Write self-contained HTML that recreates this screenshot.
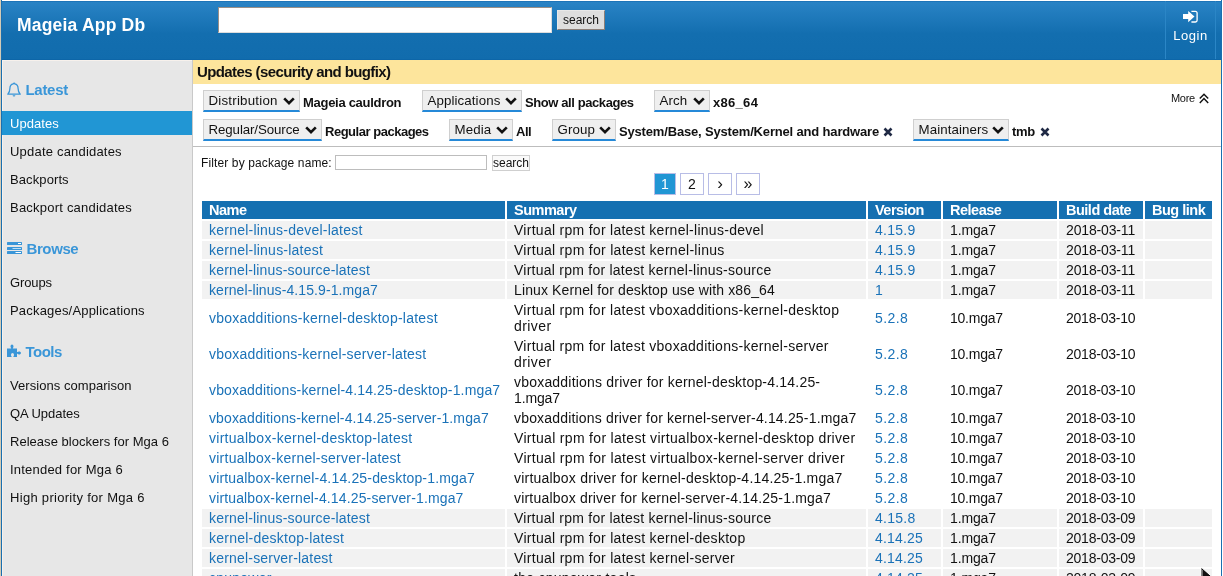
<!DOCTYPE html>
<html><head><meta charset="utf-8">
<style>
*{box-sizing:border-box}
html,body{margin:0;padding:0}
body{width:1223px;height:576px;overflow:hidden;position:relative;background:#fff;font-family:"Liberation Sans",sans-serif;color:#111}
.a{position:absolute;white-space:nowrap}
#edgeL{left:0;top:0;width:1px;height:576px;background:#d3cbb6}
#bordL{left:1px;top:0;width:1px;height:576px;background:#1a6fb0}
#bordR{left:1221px;top:0;width:1px;height:576px;background:#1a6fb0}
#hdr{left:1px;top:1px;width:1221px;height:59px;border-top:1px solid #1d74b8;background:linear-gradient(#2983c5,#136eaf 55%,#116cad)}
#hdrline{left:1px;top:59px;width:1221px;height:1px;background:#0d66a8}
#side{left:2px;top:60px;width:190px;height:516px;background:#e7e7e7;border-top:1px solid #f7f1ec;border-left:1px solid #f7f1ec}
#sideB{left:192px;top:60px;width:1px;height:516px;background:#c9c9c9}
#title{left:17px;top:15px;font-size:17.5px;font-weight:bold;color:#fff;letter-spacing:0.2px}
#q{left:218px;top:7px;width:334px;height:26px;background:#fff;border:1px solid #9a8f88;border-right-color:#ddd;border-bottom-color:#ddd}
#qb{left:557px;top:10px;width:48px;height:20px;background:#dedede;border:1px solid #8c7f78;border-top-color:#e8e8e8;border-left-color:#e8e8e8;font-size:12px;line-height:18px;text-align:center;color:#111}
#loginL{left:1165px;top:1px;width:1px;height:58px;background:#2b86c6}
#loginR{left:1215px;top:1px;width:1px;height:58px;background:#2b86c6}
#login{left:1166px;top:28px;width:49px;text-align:center;color:#fff;font-size:13px;letter-spacing:0.5px}
#banner{left:193px;top:60px;width:1028px;height:24px;background:#fde59c}
#btitle{left:197px;top:63px;font-size:15px;font-weight:bold;color:#111;letter-spacing:-0.6px}
.sh{font-size:15px;font-weight:bold;color:#3a96d8}
.si{font-size:13px;color:#111;left:10px;letter-spacing:0.2px}
#act{left:2px;top:111px;width:190px;height:24px;background:#2196d4}
.sel{height:22px;background:#efefef;border:1px solid #cfcfcf;border-bottom:2px solid #2589d8;font-size:13.3px;color:#111;padding-left:4.5px;line-height:19px;letter-spacing:0.1px}
.sel svg{position:absolute;right:4px;top:6px}
.fv{font-size:13px;font-weight:bold;color:#111;margin-top:0.5px}
#sep{left:193px;top:146px;width:1028px;height:1px;background:#bdbdbd}
.pg{top:173px;height:22px;border:1px solid #b8bde6;font-size:14px;text-align:center;line-height:20px;color:#111}
table{position:absolute;left:200px;top:199px;width:1014px;border-collapse:separate;border-spacing:2px;table-layout:fixed;font-size:14px}
td,th{padding:0 0 0 7px;line-height:16px;vertical-align:middle;text-align:left;white-space:nowrap;overflow:hidden}
th{background:#1570b1;color:#fff;font-weight:bold;height:18px;font-size:14.5px;letter-spacing:-0.5px}
td{height:18px;letter-spacing:0.18px}
tr.g td{background:#f2f2f2}
td.w{white-space:normal}
a{color:#1a72b8;text-decoration:none}
#wrap{position:absolute;left:0;top:0;width:1223px;height:576px;overflow:hidden;background:#fff;will-change:transform}
</style></head><body><div id="wrap">
<div class="a" id="edgeL"></div>
<div class="a" id="hdr"></div>
<div class="a" id="hdrline"></div>
<div class="a" id="side"></div>
<div class="a" id="sideB"></div>
<div class="a" id="bordL"></div>
<div class="a" id="bordR"></div>

<div class="a" id="title">Mageia App Db</div>
<div class="a" id="q"></div>
<div class="a" id="qb">search</div>
<div class="a" id="loginL"></div>
<div class="a" id="loginR"></div>
<svg class="a" style="left:1183px;top:10px" width="16" height="14" viewBox="0 0 16 14"><path d="M0 4h5.2V1l6.3 5.6-6.3 5.6V9H0z" fill="#fff"/><path d="M8.4 1.4h4a1.7 1.7 0 0 1 1.7 1.7v7.2a1.7 1.7 0 0 1-1.7 1.7h-4" fill="none" stroke="#fff" stroke-width="1.3"/></svg>
<div class="a" id="login">Login</div>

<!-- sidebar -->
<svg class="a" style="left:7px;top:82px" width="14" height="15" viewBox="0 0 14 15"><path d="M7 1.2c.5 0 .8.3.8.7 2.3.4 3.3 2.3 3.3 4.6 0 2.3.3 3.9 2.1 5.7H.8c1.8-1.8 2.1-3.4 2.1-5.7 0-2.3 1-4.2 3.3-4.6 0-.4.3-.7.8-.7z" fill="none" stroke="#3a96d8" stroke-width="1.3" stroke-linejoin="round"/><path d="M5.6 13.2a1.4 1.4 0 0 0 2.8 0z" fill="#3a96d8"/></svg>
<div class="a sh" style="left:25.5px;top:81px;letter-spacing:-0.3px">Latest</div>
<div class="a" id="act"></div>
<div class="a si" style="top:116px;color:#fff;letter-spacing:0.05px">Updates</div>
<div class="a si" style="top:144px;letter-spacing:0.2px">Update candidates</div>
<div class="a si" style="top:172px;letter-spacing:0.1px">Backports</div>
<div class="a si" style="top:200px;letter-spacing:0.22px">Backport candidates</div>
<svg class="a" style="left:7px;top:242px" width="15" height="12" viewBox="0 0 15 12"><rect x="0" y="0" width="15" height="3" rx=".6" fill="#3a96d8"/><rect x="0" y="5" width="15" height="3" rx=".6" fill="#3a96d8"/><rect x="0" y="9" width="15" height="3" rx=".6" fill="#3a96d8"/><rect x="11" y="1" width="3" height="1" fill="#fff"/><rect x="5.5" y="6" width="8.5" height="1" fill="#bfe0f5"/><rect x="8.5" y="10" width="5.5" height="1" fill="#fff"/></svg>
<div class="a sh" style="left:26.5px;top:240px;letter-spacing:-0.4px">Browse</div>
<div class="a si" style="top:275px;letter-spacing:-0.13px">Groups</div>
<div class="a si" style="top:303px;letter-spacing:0.19px">Packages/Applications</div>
<svg class="a" style="left:7px;top:344px" width="14" height="13" viewBox="0 0 14 13"><path d="M0 4.5h3.8c.4 0 .5-.3.3-.6-.4-.4-.6-.8-.6-1.3C3.5 1.3 4.2.5 5 .5s1.5.8 1.5 2.1c0 .5-.2.9-.6 1.3-.2.3-.1.6.3.6H10v3.2c0 .4.3.5.6.3.4-.4.8-.6 1.3-.6 1.3 0 2.1.7 2.1 1.5s-.8 1.5-2.1 1.5c-.5 0-.9-.2-1.3-.6-.3-.2-.6-.1-.6.3V13H6.7c-.4 0-.5-.3-.3-.6.4-.4.6-.8.6-1.3 0-1.3-.7-2.1-1.5-2.1s-1.5.8-1.5 2.1c0 .5.2.9.6 1.3.2.3.1.6-.3.6H0z" fill="#3a96d8"/></svg>
<div class="a sh" style="left:25.5px;top:343px;letter-spacing:-0.5px">Tools</div>
<div class="a si" style="top:378px;letter-spacing:0.05px">Versions comparison</div>
<div class="a si" style="top:406px;letter-spacing:-0.05px">QA Updates</div>
<div class="a si" style="top:434px;letter-spacing:0.03px">Release blockers for Mga 6</div>
<div class="a si" style="top:462px;letter-spacing:0.21px">Intended for Mga 6</div>
<div class="a si" style="top:490px;letter-spacing:0.3px">High priority for Mga 6</div>

<div class="a" id="banner"></div>
<div class="a" id="btitle">Updates (security and bugfix)</div>


<!-- filters -->
<div class="a sel" style="left:203px;top:90px;width:97px;letter-spacing:0.22px">Distribution<svg width="12" height="9" viewBox="0 0 12 9"><path d="M1.2 1.4l4.8 4.8 4.8-4.8" fill="none" stroke="#111" stroke-width="2.6"/></svg></div>
<div class="a fv" style="left:303px;top:94px;letter-spacing:-0.29px">Mageia cauldron</div>
<div class="a sel" style="left:422px;top:90px;width:100px">Applications<svg width="12" height="9" viewBox="0 0 12 9"><path d="M1.2 1.4l4.8 4.8 4.8-4.8" fill="none" stroke="#111" stroke-width="2.6"/></svg></div>
<div class="a fv" style="left:525px;top:94px;letter-spacing:-0.41px">Show all packages</div>
<div class="a sel" style="left:654px;top:90px;width:56px">Arch<svg width="12" height="9" viewBox="0 0 12 9"><path d="M1.2 1.4l4.8 4.8 4.8-4.8" fill="none" stroke="#111" stroke-width="2.6"/></svg></div>
<div class="a fv" style="left:713px;top:94px;letter-spacing:0.3px">x86_64</div>
<div class="a" style="left:1171px;top:92px;font-size:11px;color:#111;letter-spacing:-0.3px">More</div>
<svg class="a" style="left:1199px;top:93px" width="11" height="11" viewBox="0 0 11 11"><path d="M0.8 5.6L5 1.2l4.2 4.4M0.8 10L5 5.6l4.2 4.4" fill="none" stroke="#111" stroke-width="1.4"/></svg>

<div class="a sel" style="left:203px;top:119px;width:119px;letter-spacing:-0.1px">Regular/Source<svg width="12" height="9" viewBox="0 0 12 9"><path d="M1.2 1.4l4.8 4.8 4.8-4.8" fill="none" stroke="#111" stroke-width="2.6"/></svg></div>
<div class="a fv" style="left:325px;top:123px;letter-spacing:-0.48px">Regular packages</div>
<div class="a sel" style="left:449px;top:119px;width:64px">Media<svg width="12" height="9" viewBox="0 0 12 9"><path d="M1.2 1.4l4.8 4.8 4.8-4.8" fill="none" stroke="#111" stroke-width="2.6"/></svg></div>
<div class="a fv" style="left:516px;top:123px;letter-spacing:-0.5px">All</div>
<div class="a sel" style="left:552px;top:119px;width:64px">Group<svg width="12" height="9" viewBox="0 0 12 9"><path d="M1.2 1.4l4.8 4.8 4.8-4.8" fill="none" stroke="#111" stroke-width="2.6"/></svg></div>
<div class="a fv" style="left:619px;top:123px;letter-spacing:-0.17px">System/Base, System/Kernel and hardware</div>
<svg class="a" style="left:883px;top:127px" width="10" height="10" viewBox="0 0 10 10"><path d="M1.5 1.5l7 7M8.5 1.5l-7 7" stroke="#202a45" stroke-width="2.6"/></svg>
<div class="a sel" style="left:913px;top:119px;width:96px">Maintainers<svg width="12" height="9" viewBox="0 0 12 9"><path d="M1.2 1.4l4.8 4.8 4.8-4.8" fill="none" stroke="#111" stroke-width="2.6"/></svg></div>
<div class="a fv" style="left:1012px;top:123px;letter-spacing:-0.37px">tmb</div>
<svg class="a" style="left:1040px;top:127px" width="10" height="10" viewBox="0 0 10 10"><path d="M1.5 1.5l7 7M8.5 1.5l-7 7" stroke="#202a45" stroke-width="2.6"/></svg>
<div class="a" id="sep"></div>

<div class="a" style="left:201px;top:156px;font-size:12px;color:#111;letter-spacing:0.12px">Filter by package name:</div>
<div class="a" style="left:335px;top:155px;width:152px;height:15px;border:1px solid #bdbdbd;background:#fff"></div>
<div class="a" style="left:492px;top:155px;width:38px;height:16px;border:1px solid #cfcfcf;background:#fafafa;font-size:12px;line-height:14px;text-align:center;color:#111">search</div>

<div class="a pg" style="left:654px;width:22px;background:#2196d4;color:#fff">1</div>
<div class="a pg" style="left:680px;width:24px">2</div>
<div class="a pg" style="left:708px;width:24px;font-size:17px">&rsaquo;</div>
<div class="a pg" style="left:736px;width:24px;font-size:16px">&raquo;</div>

<table>
<colgroup><col style="width:303px"><col style="width:359px"><col style="width:73px"><col style="width:114px"><col style="width:84px"><col style="width:67px"></colgroup>
<tr><th>Name</th><th>Summary</th><th>Version</th><th>Release</th><th>Build date</th><th>Bug link</th></tr>
<tr class="g"><td><a><span style="letter-spacing:0.229px">kernel-linus-devel-latest</span></a></td><td><span style="letter-spacing:0.278px">Virtual rpm for latest kernel-linus-devel</span></td><td><a><span style="letter-spacing:0.26px">4.15.9</span></a></td><td><span style="letter-spacing:-0.15px">1.mga7</span></td><td><span style="letter-spacing:-0.15px">2018-03-11</span></td><td></td></tr>
<tr class="g"><td><a><span style="letter-spacing:0.231px">kernel-linus-latest</span></a></td><td><span style="letter-spacing:0.288px">Virtual rpm for latest kernel-linus</span></td><td><a><span style="letter-spacing:0.26px">4.15.9</span></a></td><td><span style="letter-spacing:-0.15px">1.mga7</span></td><td><span style="letter-spacing:-0.15px">2018-03-11</span></td><td></td></tr>
<tr class="g"><td><a><span style="letter-spacing:0.177px">kernel-linus-source-latest</span></a></td><td><span style="letter-spacing:0.245px">Virtual rpm for latest kernel-linus-source</span></td><td><a><span style="letter-spacing:0.26px">4.15.9</span></a></td><td><span style="letter-spacing:-0.15px">1.mga7</span></td><td><span style="letter-spacing:-0.15px">2018-03-11</span></td><td></td></tr>
<tr class="g"><td><a><span style="letter-spacing:0.094px">kernel-linus-4.15.9-1.mga7</span></a></td><td><span style="letter-spacing:0.121px">Linux Kernel for desktop use with x86_64</span></td><td><a><span style="letter-spacing:0px">1</span></a></td><td><span style="letter-spacing:-0.15px">1.mga7</span></td><td><span style="letter-spacing:-0.15px">2018-03-11</span></td><td></td></tr>
<tr class="w" style="height:34px"><td><a><span style="letter-spacing:0.244px">vboxadditions-kernel-desktop-latest</span></a></td><td><span style="letter-spacing:0.279px">Virtual rpm for latest vboxadditions-kernel-desktop</span><br><span style="letter-spacing:0.415px">driver</span></td><td><a><span style="letter-spacing:0.39px">5.2.8</span></a></td><td><span style="letter-spacing:-0.23px">10.mga7</span></td><td><span style="letter-spacing:-0.23px">2018-03-10</span></td><td></td></tr>
<tr class="w" style="height:34px"><td><a><span style="letter-spacing:0.215px">vboxadditions-kernel-server-latest</span></a></td><td><span style="letter-spacing:0.277px">Virtual rpm for latest vboxadditions-kernel-server</span><br><span style="letter-spacing:0.415px">driver</span></td><td><a><span style="letter-spacing:0.39px">5.2.8</span></a></td><td><span style="letter-spacing:-0.23px">10.mga7</span></td><td><span style="letter-spacing:-0.23px">2018-03-10</span></td><td></td></tr>
<tr class="w" style="height:34px"><td><a><span style="letter-spacing:0.15px">vboxadditions-kernel-4.14.25-desktop-1.mga7</span></a></td><td><span style="letter-spacing:0.203px">vboxadditions driver for kernel-desktop-4.14.25-</span><br><span style="letter-spacing:-0.15px">1.mga7</span></td><td><a><span style="letter-spacing:0.39px">5.2.8</span></a></td><td><span style="letter-spacing:-0.23px">10.mga7</span></td><td><span style="letter-spacing:-0.23px">2018-03-10</span></td><td></td></tr>
<tr class="w"><td><a><span style="letter-spacing:0.123px">vboxadditions-kernel-4.14.25-server-1.mga7</span></a></td><td><span style="letter-spacing:0.177px">vboxadditions driver for kernel-server-4.14.25-1.mga7</span></td><td><a><span style="letter-spacing:0.39px">5.2.8</span></a></td><td><span style="letter-spacing:-0.23px">10.mga7</span></td><td><span style="letter-spacing:-0.23px">2018-03-10</span></td><td></td></tr>
<tr class="w"><td><a><span style="letter-spacing:0.277px">virtualbox-kernel-desktop-latest</span></a></td><td><span style="letter-spacing:0.313px">Virtual rpm for latest virtualbox-kernel-desktop driver</span></td><td><a><span style="letter-spacing:0.39px">5.2.8</span></a></td><td><span style="letter-spacing:-0.23px">10.mga7</span></td><td><span style="letter-spacing:-0.23px">2018-03-10</span></td><td></td></tr>
<tr class="w"><td><a><span style="letter-spacing:0.245px">virtualbox-kernel-server-latest</span></a></td><td><span style="letter-spacing:0.312px">Virtual rpm for latest virtualbox-kernel-server driver</span></td><td><a><span style="letter-spacing:0.39px">5.2.8</span></a></td><td><span style="letter-spacing:-0.23px">10.mga7</span></td><td><span style="letter-spacing:-0.23px">2018-03-10</span></td><td></td></tr>
<tr class="w"><td><a><span style="letter-spacing:0.169px">virtualbox-kernel-4.14.25-desktop-1.mga7</span></a></td><td><span style="letter-spacing:0.215px">virtualbox driver for kernel-desktop-4.14.25-1.mga7</span></td><td><a><span style="letter-spacing:0.39px">5.2.8</span></a></td><td><span style="letter-spacing:-0.23px">10.mga7</span></td><td><span style="letter-spacing:-0.23px">2018-03-10</span></td><td></td></tr>
<tr class="w"><td><a><span style="letter-spacing:0.141px">virtualbox-kernel-4.14.25-server-1.mga7</span></a></td><td><span style="letter-spacing:0.194px">virtualbox driver for kernel-server-4.14.25-1.mga7</span></td><td><a><span style="letter-spacing:0.39px">5.2.8</span></a></td><td><span style="letter-spacing:-0.23px">10.mga7</span></td><td><span style="letter-spacing:-0.23px">2018-03-10</span></td><td></td></tr>
<tr class="g"><td><a><span style="letter-spacing:0.177px">kernel-linus-source-latest</span></a></td><td><span style="letter-spacing:0.245px">Virtual rpm for latest kernel-linus-source</span></td><td><a><span style="letter-spacing:0.26px">4.15.8</span></a></td><td><span style="letter-spacing:-0.15px">1.mga7</span></td><td><span style="letter-spacing:-0.23px">2018-03-09</span></td><td></td></tr>
<tr class="g"><td><a><span style="letter-spacing:0.243px">kernel-desktop-latest</span></a></td><td><span style="letter-spacing:0.292px">Virtual rpm for latest kernel-desktop</span></td><td><a><span style="letter-spacing:0.17px">4.14.25</span></a></td><td><span style="letter-spacing:-0.15px">1.mga7</span></td><td><span style="letter-spacing:-0.23px">2018-03-09</span></td><td></td></tr>
<tr class="g"><td><a><span style="letter-spacing:0.191px">kernel-server-latest</span></a></td><td><span style="letter-spacing:0.29px">Virtual rpm for latest kernel-server</span></td><td><a><span style="letter-spacing:0.17px">4.14.25</span></a></td><td><span style="letter-spacing:-0.15px">1.mga7</span></td><td><span style="letter-spacing:-0.23px">2018-03-09</span></td><td></td></tr>
<tr class="g"><td><a><span style="letter-spacing:0.235px">cpupower</span></a></td><td><span style="letter-spacing:0.269px">the cpupower tools</span></td><td><a><span style="letter-spacing:0.17px">4.14.25</span></a></td><td><span style="letter-spacing:-0.15px">1.mga7</span></td><td><span style="letter-spacing:-0.23px">2018-03-09</span></td><td></td></tr>
</table>
<svg class="a" style="left:1200px;top:566px" width="14" height="12" viewBox="0 0 14 12"><path d="M1 1v14l3.5-3.5 2.5 5 2-1-2.5-4.8H12z" fill="#111" stroke="#fff" stroke-width="1"/><path d="M2.5 4v7" stroke="#888" stroke-width="0.8"/></svg>
</div></body></html>
